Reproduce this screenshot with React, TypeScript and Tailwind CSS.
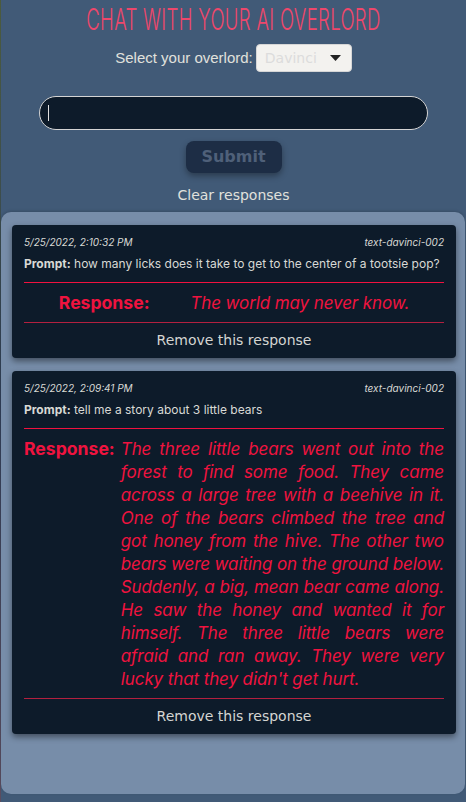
import React from "react";

const cards = [
  {
    time: "5/25/2022, 2:10:32 PM",
    model: "text-davinci-002",
    prompt: "how many licks does it take to get to the center of a tootsie pop?",
    response: ["The world may never know."],
  },
  {
    time: "5/25/2022, 2:09:41 PM",
    model: "text-davinci-002",
    prompt: "tell me a story about 3 little bears",
    response: [
      "The three little bears went out into the",
      "forest to find some food. They came",
      "across a large tree with a beehive in it.",
      "One of the bears climbed the tree and",
      "got honey from the hive. The other two",
      "bears were waiting on the ground below.",
      "Suddenly, a big, mean bear came along.",
      "He saw the honey and wanted it for",
      "himself. The three little bears were",
      "afraid and ran away. They were very",
      "lucky that they didn't get hurt.",
    ],
  },
];

function Card({ c }: { c: (typeof cards)[number] }) {
  return (
    <div className="bg-[#0d1b2a] rounded-[4px] px-3 pt-[10px] shadow-[0_3px_6px_rgba(0,0,0,0.45)] font-['Inter',sans-serif]">
      <div className="flex justify-between italic text-[10px] leading-[14px] text-[#d8d9d5]">
        <span>{c.time}</span>
        <span>{c.model}</span>
      </div>
      <div className="mt-[7px] text-[12px] leading-[16px] text-[#d8d9d5]">
        <span className="font-bold">Prompt:</span> {c.prompt}
      </div>
      <div className="mt-[10px] h-px bg-[#f0123f]" />
      <div className="flex justify-evenly items-baseline pt-[8px] pb-[7px] leading-[23px] text-[#f0133f]">
        <span className="font-bold text-[17.6px] mr-[6px] shrink-0">Response:</span>
        <div className="italic text-[17px] tracking-[-0.1px] min-w-0">
          {c.response.map((line, i) =>
            i < c.response.length - 1 ? (
              <span key={i} className="block whitespace-nowrap text-justify [text-align-last:justify]">
                {line}
              </span>
            ) : (
              <span key={i} className="block whitespace-nowrap">
                {line}
              </span>
            )
          )}
        </div>
      </div>
      <div className="h-px bg-[#b3203f]" />
      <div className="text-center font-['DejaVu_Sans',sans-serif] text-[14px] leading-[18px] text-[#d4d5d2] pt-[8px] pb-[9px]">
        Remove this response
      </div>
    </div>
  );
}

export default function App() {
  return (
    <div className="w-[466px] h-[802px] bg-[#415a77] flex overflow-hidden">
      <div className="w-px shrink-0 bg-gradient-to-b from-[#4c5b3d] via-[#2f3e57] to-[#5b4d60]" />
      <div className="flex-1 min-w-0 flex flex-col">
        <div className="flex justify-center pt-[2px] h-[34px] items-start overflow-visible">
          <h1 className="shrink-0 font-['Inter',sans-serif] font-light text-[30px] leading-[34px] text-[#ef476b] scale-x-[0.62] whitespace-nowrap tracking-[0.5px]">
            CHAT WITH YOUR AI OVERLORD
          </h1>
        </div>
        <div className="flex justify-center items-center mt-[10px] gap-[3px]">
          <span className="font-['Liberation_Sans',sans-serif] text-[15px] text-[#e0e1dd]">
            Select your overlord:
          </span>
          <div className="w-[96px] h-[28px] bg-[#f3f2ef] border border-[#d6d6d6] rounded-[4px] flex items-center justify-between pl-[8px] pr-[10px]">
            <span className="font-['DejaVu_Sans',sans-serif] text-[14px] text-[#dcdcdc]">Davinci</span>
            <svg width="11" height="6" viewBox="0 0 11 6">
              <path d="M0 0 L11 0 L5.5 6 Z" fill="#222" />
            </svg>
          </div>
        </div>
        <div className="mt-[24px] mx-[38px] h-[34px] rounded-full border border-[#d4d4d4] bg-[#0d1b2a] flex items-center pl-[8px]">
          <span className="w-px h-[16px] bg-[#e0e0e0]" />
        </div>
        <div className="flex justify-center mt-[11px]">
          <button className="w-[96px] h-[32px] rounded-[8px] bg-[#1d2d45] shadow-[0_3px_6px_rgba(0,0,0,0.35)] font-['DejaVu_Sans',sans-serif] font-bold text-[16px] text-[#4f6079]">
            Submit
          </button>
        </div>
        <div className="text-center mt-[13px] font-['DejaVu_Sans',sans-serif] text-[14px] leading-[18px] text-[#e0e1dd]">
          Clear responses
        </div>
        <div className="mt-[8px] mr-px h-[582px] bg-[#778da9] rounded-[10px] shadow-[0_-1px_3px_rgba(0,0,0,0.15)] pl-[11px] pr-[9px] pt-[13px] flex flex-col gap-[13px]">
          {cards.map((c, i) => (
            <Card key={i} c={c} />
          ))}
        </div>
      </div>
    </div>
  );
}
